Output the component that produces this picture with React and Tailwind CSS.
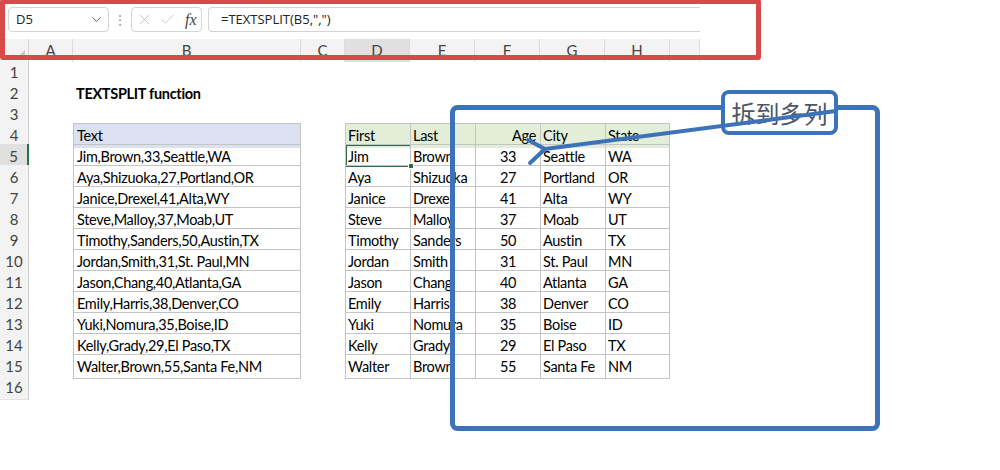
import React from "react";
import { ChevronDown, X, Check } from "lucide-react";

const rows = [
  "Jim,Brown,33,Seattle,WA",
  "Aya,Shizuoka,27,Portland,OR",
  "Janice,Drexel,41,Alta,WY",
  "Steve,Malloy,37,Moab,UT",
  "Timothy,Sanders,50,Austin,TX",
  "Jordan,Smith,31,St. Paul,MN",
  "Jason,Chang,40,Atlanta,GA",
  "Emily,Harris,38,Denver,CO",
  "Yuki,Nomura,35,Boise,ID",
  "Kelly,Grady,29,El Paso,TX",
  "Walter,Brown,55,Santa Fe,NM",
];

const letters = ["A", "B", "C", "D", "E", "F", "G", "H", ""];
const grid =
  "grid grid-cols-[29px_44px_228px_44px_65px_65px_65px_65px_65px_30px]";

const Cell = ({ r, c }) => {
  // B column table
  if (c === 2 && r >= 4 && r <= 15) {
    const head = r === 4;
    return (
      <div
        className={`border-l border-t border-r border-[#c4c4c4] pl-[3px] pt-[1px] flex items-center ${
          head ? "bg-[#dbe1f1]" : ""
        } ${r === 15 ? "border-b" : ""}`}
      >
        {head ? "Text" : rows[r - 5]}
      </div>
    );
  }
  // split table D:H
  if (c >= 4 && c <= 8 && r >= 4 && r <= 15) {
    const head = r === 4;
    const i = c - 4;
    const val = head
      ? ["First", "Last", "Age", "City", "State"][i]
      : rows[r - 5].split(",")[i];
    const align =
      i === 2 ? (head ? "justify-end pr-[4px]" : "justify-center") : "pl-[2px]";
    return (
      <div
        className={`relative border-l border-t border-[#c4c4c4] pt-[1px] flex items-center whitespace-nowrap overflow-hidden ${align} ${
          head ? "bg-[#e3eed9]" : ""
        } ${r === 15 ? "border-b" : ""} ${c === 8 ? "border-r" : ""}`}
      >
        {val}
        {r === 5 && c === 4 && (
          <div className="absolute -left-[1px] -top-[1px] w-[67px] h-[23px] border-2 border-[#2f6b47]" />
        )}
      </div>
    );
  }
  if (r === 2 && c === 2) {
    return <div className="pl-[3px] pt-[1px] flex items-center font-bold whitespace-nowrap">TEXTSPLIT function</div>;
  }
  return <div />;
};

export default function App() {
  return (
    <div className="relative w-[1000px] h-[470px] overflow-hidden bg-white text-black">
      {/* formula bar */}
      <div className="flex items-start h-[39px] pt-[7px] pl-[8px] w-[700px] font-['Open_Sans',sans-serif] text-[13px] text-[#222]">
        <div className="w-[101px] h-[25px] border border-[#d4d4d4] rounded-[4px] bg-white flex items-center justify-between pl-[7px] pr-[4px]">
          <span>D5</span>
          <ChevronDown size={15} strokeWidth={1.5} className="text-[#555]" />
        </div>
        <div className="w-[22px] h-[25px] flex items-center justify-center text-[#a0a0a0] text-[14px]">⋮</div>
        <div className="w-[71px] h-[25px] border border-[#d4d4d4] rounded-[4px] bg-white flex items-center pl-[4px] gap-[6px]">
          <X size={17} strokeWidth={1} className="text-[#b5b5b5]" />
          <Check size={17} strokeWidth={1} className="text-[#b5b5b5]" />
          <span className="font-['Liberation_Serif',serif] italic text-[16px] text-[#444] ml-[3px]">fx</span>
        </div>
        <div className="ml-[6px] flex-1 h-[25px] border border-[#d4d4d4] rounded-l-[4px] border-r-0 bg-white flex items-center pl-[12px]">
          =TEXTSPLIT(B5,",")
        </div>
      </div>

      {/* sheet */}
      <div className="font-['Lato',sans-serif] text-[14.5px] tracking-[-0.3px] w-[700px]">
        <div className={`${grid} h-[21px] bg-[#f3f3f3] text-[#444] text-[15px] tracking-normal`}>
          <div className="relative border-r border-[#d8d8d8]">
            <svg className="absolute right-[3px] bottom-[3px]" width="9" height="9">
              <polygon points="9,0 9,9 0,9" fill="#c8c8c8" />
            </svg>
          </div>
          {letters.map((l, i) => (
            <div
              key={i}
              className={`flex items-center justify-center border-r border-[#dcdcdc] ${
                l === "D" ? "bg-[#e0e0e0]" : ""
              }`}
            >
              {l}
            </div>
          ))}
        </div>
        {Array.from({ length: 16 }, (_, k) => k + 1).map((r) => (
          <div key={r} className={`${grid} h-[21px]`}>
            <div
              className={`flex items-center justify-center pt-[1px] text-[#444] text-[15px] tracking-normal border-b border-[#e4e4e4] ${
                r === 5
                  ? "bg-[#e0e0e0] border-r-2 border-r-[#217346]"
                  : "bg-[#f3f3f3] border-r border-r-[#d0d0d0]"
              }`}
            >
              {r}
            </div>
            {Array.from({ length: 9 }, (_, c) => (
              <Cell key={c} r={r} c={c + 1} />
            ))}
          </div>
        ))}
      </div>

      {/* selection handle */}
      <div className="absolute left-[408px] top-[163px] w-[6px] h-[6px] bg-[#2f6b47] border border-white" />

      {/* red highlight around formula bar */}
      <div className="absolute left-0 -top-[1px] w-[761px] h-[61px] border-[5px] border-[#d8494a] rounded-[3px]" />

      {/* blue callout */}
      <svg className="absolute inset-0" width="1000" height="470">
        <rect x="452.5" y="107.5" width="425" height="321" rx="5" fill="none" stroke="#3b72b8" strokeWidth="5" />
      </svg>
      <div className="absolute left-[721px] top-[90px] w-[117px] h-[45px] border-4 border-[#3b72b8] rounded-[8px] bg-white flex items-center justify-center text-[24px] leading-none text-[#4d5566] font-['Noto_Sans_CJK_SC',sans-serif]">
        拆到多列
      </div>
      <svg className="absolute inset-0" width="1000" height="470">
        <g stroke="#3b72b8" strokeWidth="4" strokeLinecap="round" fill="none">
          <line x1="836" y1="111" x2="545" y2="149" />
          <line x1="545" y1="149" x2="528" y2="140" />
          <line x1="545" y1="149" x2="530" y2="163" />
        </g>
      </svg>
    </div>
  );
}
